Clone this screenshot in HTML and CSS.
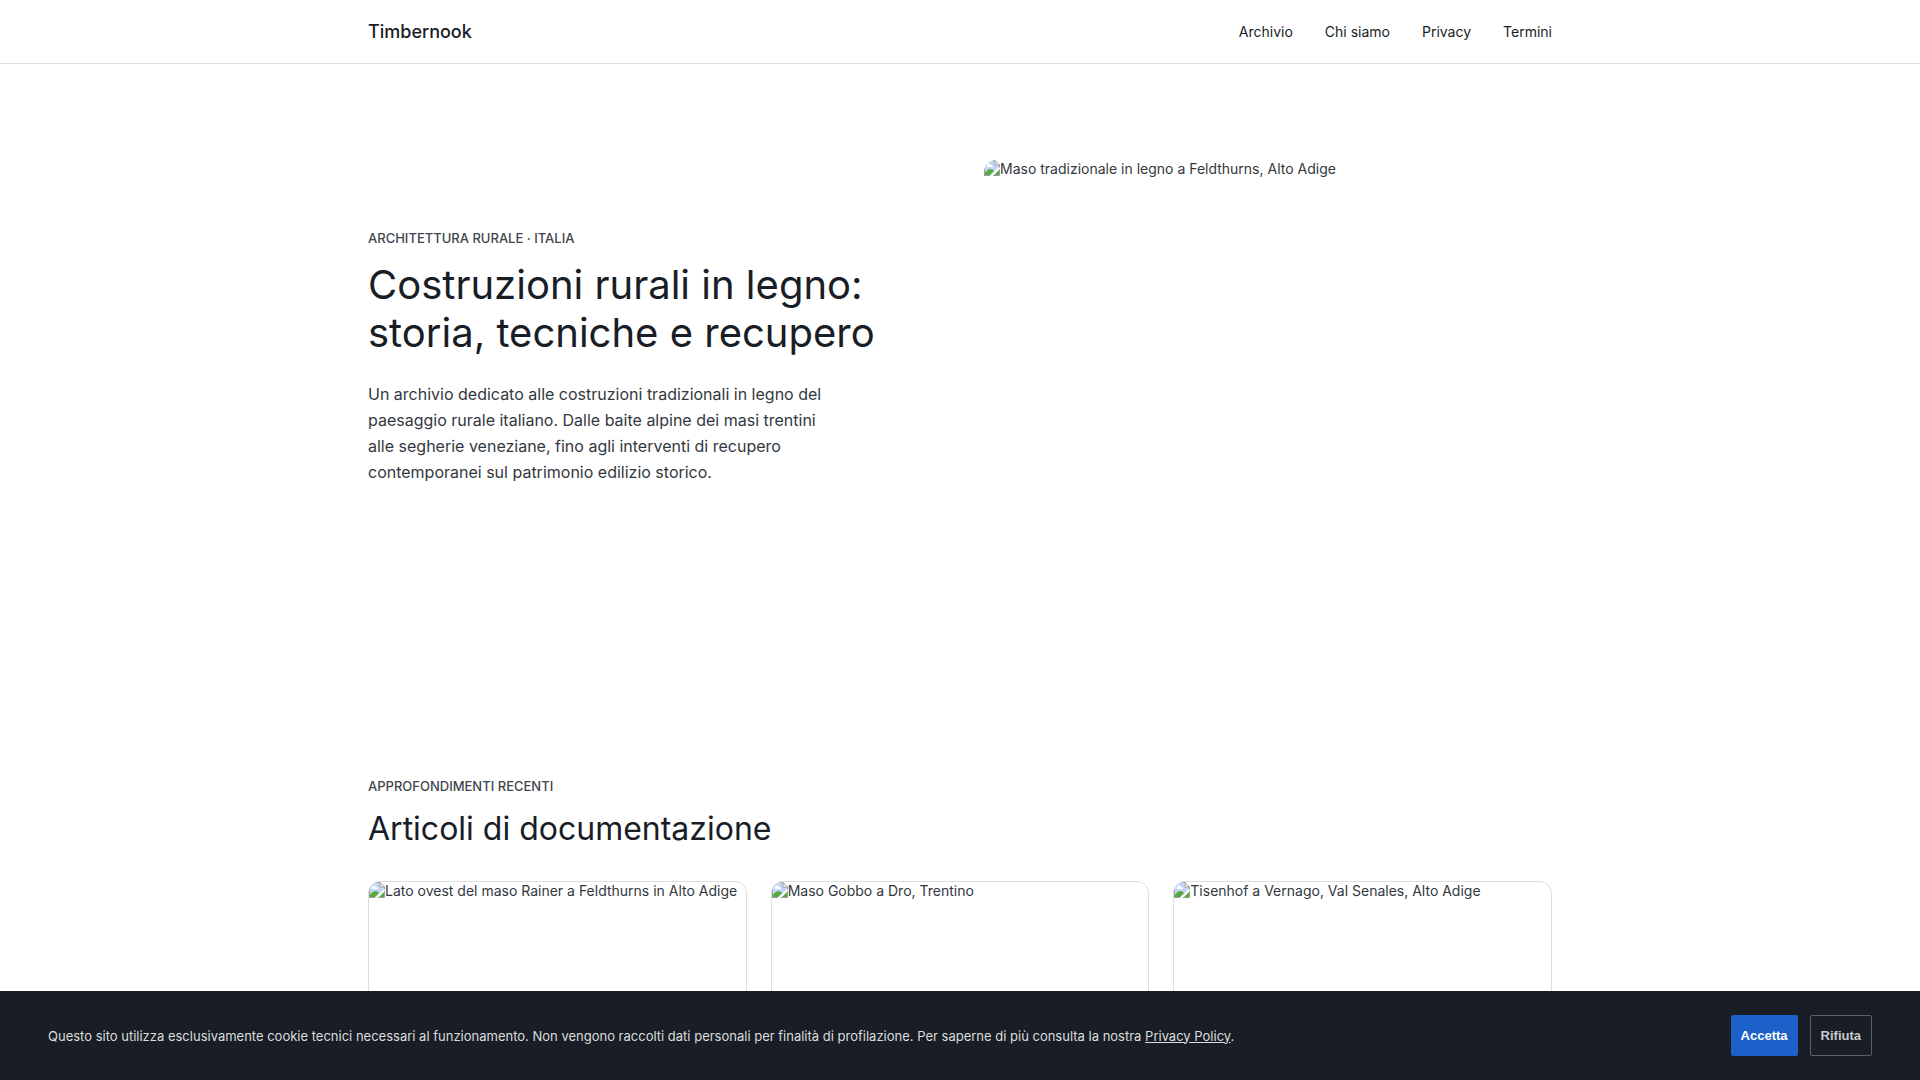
FILE: index.html
```html
<!DOCTYPE html>
<html lang="it">
<head>
<meta charset="utf-8">
<meta name="viewport" content="width=device-width, initial-scale=1">
<title>Timbernook</title>
<link rel="stylesheet" href="styles.css">
</head>
<body>
<svg class="defs" aria-hidden="true">
  <symbol id="broken" viewBox="0 0 16 16">
    <path d="M1 1h10v4h4v2L7 15H1z" fill="#c3d5f8"/>
    <path d="M3 6a2 2 0 0 1 4-1 2 2 0 0 1 2 2H3z" fill="#fff"/>
    <path d="M1 15v-2c3-5 7-5 9-2l-4 4z" fill="#55ab3a"/>
    <path d="M15 10v5h-5z" fill="#55ab3a"/>
    <path d="M.5 16V.5h10.500l4.500 4.500v2.500M11 .5V5h4.500M0 15.500h6M9 15.500h6.500V9" fill="none" stroke="#9b9b9b"/>
  </symbol>
</svg>
<header class="site-header">
  <div class="container header-inner">
    <a class="logo" href="#">Timbernook</a>
    <nav class="nav">
      <a href="#">Archivio</a>
      <a href="#">Chi siamo</a>
      <a href="#">Privacy</a>
      <a href="#">Termini</a>
    </nav>
  </div>
</header>
<main>
  <section class="container hero">
    <div class="hero-text">
      <p class="eyebrow">Architettura rurale · Italia</p>
      <h1>Costruzioni rurali in legno: storia, tecniche e recupero</h1>
      <p class="lead">Un archivio dedicato alle costruzioni tradizionali in legno del paesaggio rurale italiano. Dalle baite alpine dei masi trentini alle segherie veneziane, fino agli interventi di recupero contemporanei sul patrimonio edilizio storico.</p>
    </div>
    <div class="picture hero-picture"><svg class="broken"><use href="#broken"/></svg><span>Maso tradizionale in legno a Feldthurns, Alto Adige</span></div>
  </section>
  <section class="container articles">
    <p class="eyebrow">Approfondimenti recenti</p>
    <h2>Articoli di documentazione</h2>
    <div class="cards">
      <article class="card"><div class="picture"><svg class="broken"><use href="#broken"/></svg><span>Lato ovest del maso Rainer a Feldthurns in Alto Adige</span></div></article>
      <article class="card"><div class="picture"><svg class="broken"><use href="#broken"/></svg><span>Maso Gobbo a Dro, Trentino</span></div></article>
      <article class="card"><div class="picture"><svg class="broken"><use href="#broken"/></svg><span>Tisenhof a Vernago, Val Senales, Alto Adige</span></div></article>
    </div>
  </section>
</main>
<div class="cookie">
  <p>Questo sito utilizza esclusivamente cookie tecnici necessari al funzionamento. Non vengono raccolti dati personali per finalità di profilazione. Per saperne di più consulta la nostra <a href="#">Privacy Policy</a>.</p>
  <div class="cookie-actions">
    <button type="button" class="btn accept">Accetta</button>
    <button type="button" class="btn decline">Rifiuta</button>
  </div>
</div>
</body>
</html>
```
FILE: styles.css
```css
*, *::before, *::after { box-sizing: border-box; }
html { overflow-x: hidden; scrollbar-width: none; }
body {
  margin: 0;
  font: 400 14px/20px Inter, sans-serif;
  color: #333840;
  background: #fff;
}
h1, h2, p { margin: 0; }
.defs { display: none; }
.container { max-width: 1184px; margin: 0 auto; }
.site-header { border-bottom: 1px solid #dddddd; }
.header-inner { display: flex; align-items: center; justify-content: space-between; height: 63px; }
.logo { font-size: 18px; font-weight: 500; color: #181d26; text-decoration: none; }
.nav { display: flex; gap: 32px; }
.nav a { color: #181d26; text-decoration: none; }
.hero {
  display: grid;
  grid-template-columns: 1fr 1fr;
  gap: 48px;
  align-items: center;
  padding: 96px 0;
}
.hero-text { padding-bottom: 32px; }
.eyebrow { font-size: 13px; line-height: 18px; font-weight: 500; text-transform: uppercase; color: #41454d; margin-bottom: 14px; }
h1 { font-size: 40px; line-height: 48px; font-weight: 400; color: #181d26; margin-bottom: 24px; }
.lead { font-size: 16px; line-height: 26px; max-width: 464px; }
.picture { display: flex; align-items: flex-start; overflow: hidden; height: 220px; line-height: 18px; }
.hero-picture { height: 425px; border-radius: 12px; }
.broken { width: 16px; height: 16px; flex: none; }
.articles { padding: 96px 0; }
h2 { font-size: 32px; line-height: 40px; font-weight: 400; color: #181d26; margin-bottom: 32px; }
.cards { display: grid; grid-template-columns: repeat(3, 1fr); gap: 24px; }
.card { border: 1px solid #dddddd; border-radius: 12px; overflow: hidden; }
.cookie {
  position: fixed;
  inset: auto 0 0;
  display: flex;
  align-items: center;
  justify-content: space-between;
  gap: 24px;
  padding: 24px 48px;
  background: #181d26;
  color: #dddddd;
  font-size: 13px;
}
.cookie a { color: inherit; }
.cookie-actions { display: flex; gap: 12px; }
.btn { height: 41px; padding: 0 10px; border: 0; border-radius: 2px; font: 700 13px "Liberation Sans", sans-serif; }
.accept { background: #1b61c9; color: #fff; }
.decline { background: transparent; border: 1px solid #5c6068; color: #c8cacf; }
```
